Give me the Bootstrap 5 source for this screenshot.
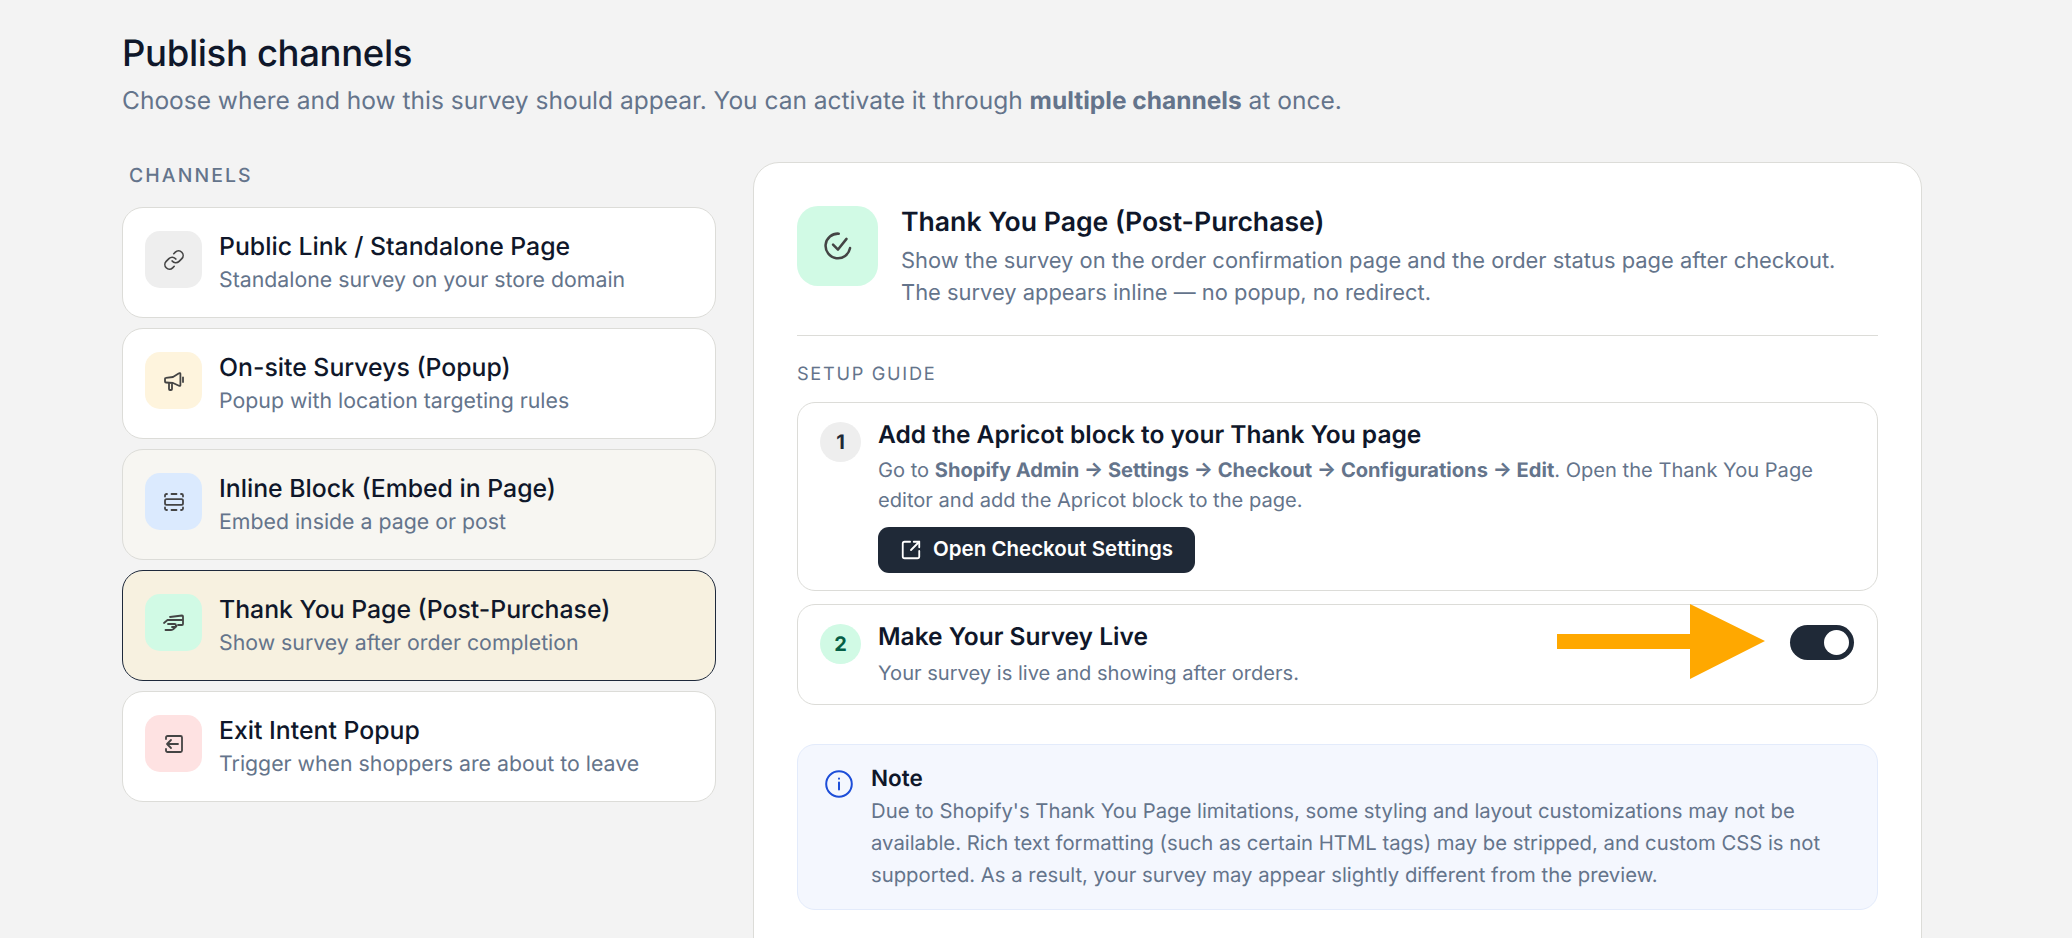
<!DOCTYPE html>
<html lang="en"><head><meta charset="utf-8"><title>Publish channels</title>
<link href="https://cdn.jsdelivr.net/npm/bootstrap@5.3.0/dist/css/bootstrap.min.css" rel="stylesheet">
<style>
html,body{height:938px;overflow:hidden}
body{background:#f3f3f3;font-family:Inter,"Liberation Sans",sans-serif;color:#0f172a;text-rendering:geometricPrecision}
.shell{padding:29px 0 0 122px;width:1922px;height:938px;overflow:hidden}
.page-title{font-size:36.5px;font-weight:500;line-height:48px;margin:0;letter-spacing:-.35px}
.page-sub{font-size:24.5px;line-height:32px;color:#64748b;margin:7px 0 0}
.page-sub b,.step-desc b{font-weight:700}
.cols{margin-top:46px;gap:37px}
.left-col{width:594px;flex:none;padding-top:1px}
.right-col{width:1169px;flex:none}
.eyebrow{line-height:24px;color:#64748b}
.left-col .eyebrow{font-size:19.4px;letter-spacing:2.1px;font-weight:500;margin:0 0 20px 7px}
.setup-label{font-size:18.2px;letter-spacing:1.7px;font-weight:400}
.chan{height:110.5px;border:1.3px solid #dcdcd8;border-radius:21px;background:#fff;padding:0 22px;margin-bottom:10.5px;gap:17px}
.chan.is-hover{background:#f7f6f2}
.chan.is-active{background:#f7f1e0;border-color:#1e293b}
.ic{width:57px;height:57px;border-radius:15px;flex:none;margin-bottom:5px}
.ic svg{width:24px;height:24px;fill:none;stroke:#444;stroke-width:1.8;stroke-linecap:round;stroke-linejoin:round}
.ic svg.ic-sm{width:22px;height:22px}
.c-gray{background:#eeeeee}.c-yellow{background:#fef4dd}.c-blue{background:#dbeafe}.c-green{background:#d1fae5}.c-red{background:#fee2e2}
.chan-title{font-size:24.8px;line-height:32px;font-weight:500;margin-bottom:4px}
.chan-sub{font-size:21.3px;line-height:28px;color:#64748b}
.panel{background:#fff;border:1.3px solid #dcdcd8;border-radius:26px;padding:43px 43px 60px;height:900px}
.head-row{gap:23px}
.head-ic{width:81px;height:80px;border-radius:21px;flex:none}
.head-ic svg{width:34px;height:34px;fill:none;stroke:#444;stroke-width:1.8;stroke-linecap:round;stroke-linejoin:round}
.head-title{font-size:26.6px;line-height:33px;font-weight:600;margin:0}
.head-desc{font-size:21.9px;line-height:32.5px;color:#64748b;margin:5.5px 0 0}
.rule{height:1.3px;background:#dcdcd8;margin:25.5px 0 26px}
.step{border:1.3px solid #dcdcd8;border-radius:18px;padding:16.3px 22px;gap:17px}
.step-1{height:189px;margin-top:15.8px;margin-bottom:13px}
.step-2{height:100.5px}
.step-2 .step-desc{margin-top:6.2px}
.num{width:41px;height:40px;margin-top:2.7px;border-radius:50%;font-size:20px;font-weight:700;flex:none;color:#1f2937;background:#eee}
.num.ok{background:#d1fae5;color:#065f46}
.step-title{font-size:24.5px;line-height:30px;font-weight:600;margin:0}
.step-desc{font-size:20.1px;line-height:30px;color:#64748b;margin:5.2px 0 0}
.go-btn{background:#1f2937;color:#fff;font-size:20.5px;font-weight:600;height:46px;width:317px;border-radius:11px;border:0;margin-top:12px;gap:11.5px;padding:0 0 0 21.5px}
.go-btn:hover{background:#1f2937;color:#fff}
.go-btn svg{width:22px;height:22px;fill:none;stroke:#fff;stroke-width:2;stroke-linecap:round;stroke-linejoin:round}
.tog{width:64px;height:35px;border-radius:18px;background:#1f2937;padding:0 5px;flex:none;margin:3.2px 1px 0 auto}
.knob{width:25px;height:25px;border-radius:50%;background:#fff}
.ann{position:absolute;left:759px;top:-1px;width:210px;height:76px}
.note{height:165.700px;margin-top:39.5px;background:#f4f7fe;border:1.3px solid #e3ebfb;border-radius:18px;padding:21px 27px;gap:18px}
.note svg{width:28px;height:28px;flex:none;fill:none;stroke:#1d4ed8;stroke-width:2;stroke-linecap:round;margin-top:4px}
.note-title{font-size:22.5px;line-height:26px;font-weight:600;margin:0}
.note-desc{font-size:20.3px;line-height:31.7px;color:#64748b;margin:3px 0 0}
.fade{position:fixed;left:0;right:0;bottom:0;height:50px;background:linear-gradient(to bottom,rgba(0,0,0,0),rgba(0,0,0,.035));-webkit-mask-image:linear-gradient(to right,transparent,#000 120px);mask-image:linear-gradient(to right,transparent,#000 120px);pointer-events:none}
</style></head>
<body>
<div class="shell">
 <h1 class="page-title">Publish channels</h1>
 <p class="page-sub">Choose where and how this survey should appear. You can activate it through <b>multiple channels</b> at once.</p>
 <div class="d-flex cols">
  <div class="left-col">
   <div class="eyebrow">CHANNELS</div>
   <div class="chan d-flex align-items-center"><div class="ic c-gray d-flex align-items-center justify-content-center"><svg class="ic-sm" viewBox="0 0 24 24"><path d="M10 13a5 5 0 0 0 7.54.54l3-3a5 5 0 0 0-7.07-7.07l-1.72 1.71"/><path d="M14 11a5 5 0 0 0-7.54-.54l-3 3a5 5 0 0 0 7.07 7.07l1.71-1.71"/></svg></div><div><div class="chan-title">Public Link / Standalone Page</div><div class="chan-sub">Standalone survey on your store domain</div></div></div>
   <div class="chan d-flex align-items-center"><div class="ic c-yellow d-flex align-items-center justify-content-center"><svg viewBox="0 0 24 24"><path d="M21 8.500v4.500"/><path d="M10 15.500V20a1 1 0 0 1-1 1H8a1 1 0 0 1-1-1v-5.500"/><path d="M11 8l6-3.800a.9.9 0 0 1 1.400.7v11.200a.9.9 0 0 1-1.400.7l-6-2.800-7-.500a1 1 0 0 1-1-1V9.800a1 1 0 0 1 1-1z"/></svg></div><div><div class="chan-title">On-site Surveys (Popup)</div><div class="chan-sub">Popup with location targeting rules</div></div></div>
   <div class="chan is-hover d-flex align-items-center"><div class="ic c-blue d-flex align-items-center justify-content-center"><svg viewBox="0 0 24 24"><rect x="3" y="9.200" width="18" height="5.600" rx="1.600"/><path d="M3 6.500V5.500A1.500 1.500 0 0 1 4.500 4H5M9.500 4h5M19 4h.5A1.500 1.500 0 0 1 21 5.500v1M3 17.500v1A1.500 1.500 0 0 0 4.500 20H5M9.500 20h5M19 20h.5a1.500 1.500 0 0 0 1.500-1.500v-1"/></svg></div><div><div class="chan-title">Inline Block (Embed in Page)</div><div class="chan-sub">Embed inside a page or post</div></div></div>
   <div class="chan is-active d-flex align-items-center"><div class="ic c-green d-flex align-items-center justify-content-center"><svg viewBox="0 0 24 24"><path d="M8 6l12-1.500a1 1 0 0 1 1 1V13a1 1 0 0 1-1 1h-4"/><path d="M2 12l3.500-3H20"/><path d="M6 13h6.500a1.500 1.500 0 0 1 0 3H10"/><path d="M3.500 19H9c2 0 3.500-2 5.500-4"/></svg></div><div><div class="chan-title">Thank You Page (Post-Purchase)</div><div class="chan-sub">Show survey after order completion</div></div></div>
   <div class="chan d-flex align-items-center"><div class="ic c-red d-flex align-items-center justify-content-center"><svg viewBox="0 0 24 24"><path d="M4 7V5.500A1.500 1.500 0 0 1 5.500 4h13A1.500 1.500 0 0 1 20 5.500v13a1.500 1.500 0 0 1-1.500 1.500h-13A1.500 1.500 0 0 1 4 18.500V17"/><path d="M16 12H5M9 8l-4 4 4 4"/></svg></div><div><div class="chan-title">Exit Intent Popup</div><div class="chan-sub">Trigger when shoppers are about to leave</div></div></div>
  </div>
  <div class="right-col">
   <div class="panel">
    <div class="d-flex head-row">
     <div class="head-ic c-green d-flex align-items-center justify-content-center"><svg viewBox="0 0 24 24"><path d="M20.500 13.500A8.700 8.700 0 1 1 12.500 3.300"/><path d="M8.500 11l3.500 3.500 6-7.500"/></svg></div>
     <div><h2 class="head-title">Thank You Page (Post-Purchase)</h2><p class="head-desc">Show the survey on the order confirmation page and the order status page after checkout.<br>The survey appears inline — no popup, no redirect.</p></div>
    </div>
    <div class="rule"></div>
    <div class="eyebrow setup-label">SETUP GUIDE</div>
    <div class="step step-1 d-flex">
     <div class="num d-flex align-items-center justify-content-center">1</div>
     <div><h3 class="step-title">Add the Apricot block to your Thank You page</h3>
     <p class="step-desc">Go to <b>Shopify Admin → Settings → Checkout → Configurations → Edit</b>. Open the Thank You Page<br>editor and add the Apricot block to the page.</p>
     <button class="btn go-btn d-flex align-items-center"><svg viewBox="0 0 24 24"><path d="M21 13v6a2 2 0 0 1-2 2H5a2 2 0 0 1-2-2V5a2 2 0 0 1 2-2h6"/><path d="M21 3l-9 9"/><path d="M15 3h6v6"/></svg>Open Checkout Settings</button></div>
    </div>
    <div class="step step-2 d-flex position-relative">
     <div class="num ok d-flex align-items-center justify-content-center">2</div>
     <div><h3 class="step-title">Make Your Survey Live</h3><p class="step-desc">Your survey is live and showing after orders.</p></div>
     <div class="tog d-flex align-items-center justify-content-end"><div class="knob"></div></div>
     <svg class="ann" viewBox="0 0 210 76"><path fill="#ffa800" d="M0 30H133V0L208 37 133 75V45H0z"/></svg>
    </div>
    <div class="note d-flex">
     <svg viewBox="0 0 28 28"><circle cx="14" cy="14" r="12.800"/><path d="M14 12.500v7M14 8.500v.2"/></svg>
     <div><h4 class="note-title">Note</h4><p class="note-desc">Due to Shopify's Thank You Page limitations, some styling and layout customizations may not be available. Rich text formatting (such as certain HTML tags) may be stripped, and custom CSS is not supported. As a result, your survey may appear slightly different from the preview.</p></div>
    </div>
   </div>
  </div>
 </div>
</div>
<div class="fade"></div>
<script src="https://cdn.jsdelivr.net/npm/bootstrap@5.3.0/dist/js/bootstrap.bundle.min.js"></script>
</body></html>
